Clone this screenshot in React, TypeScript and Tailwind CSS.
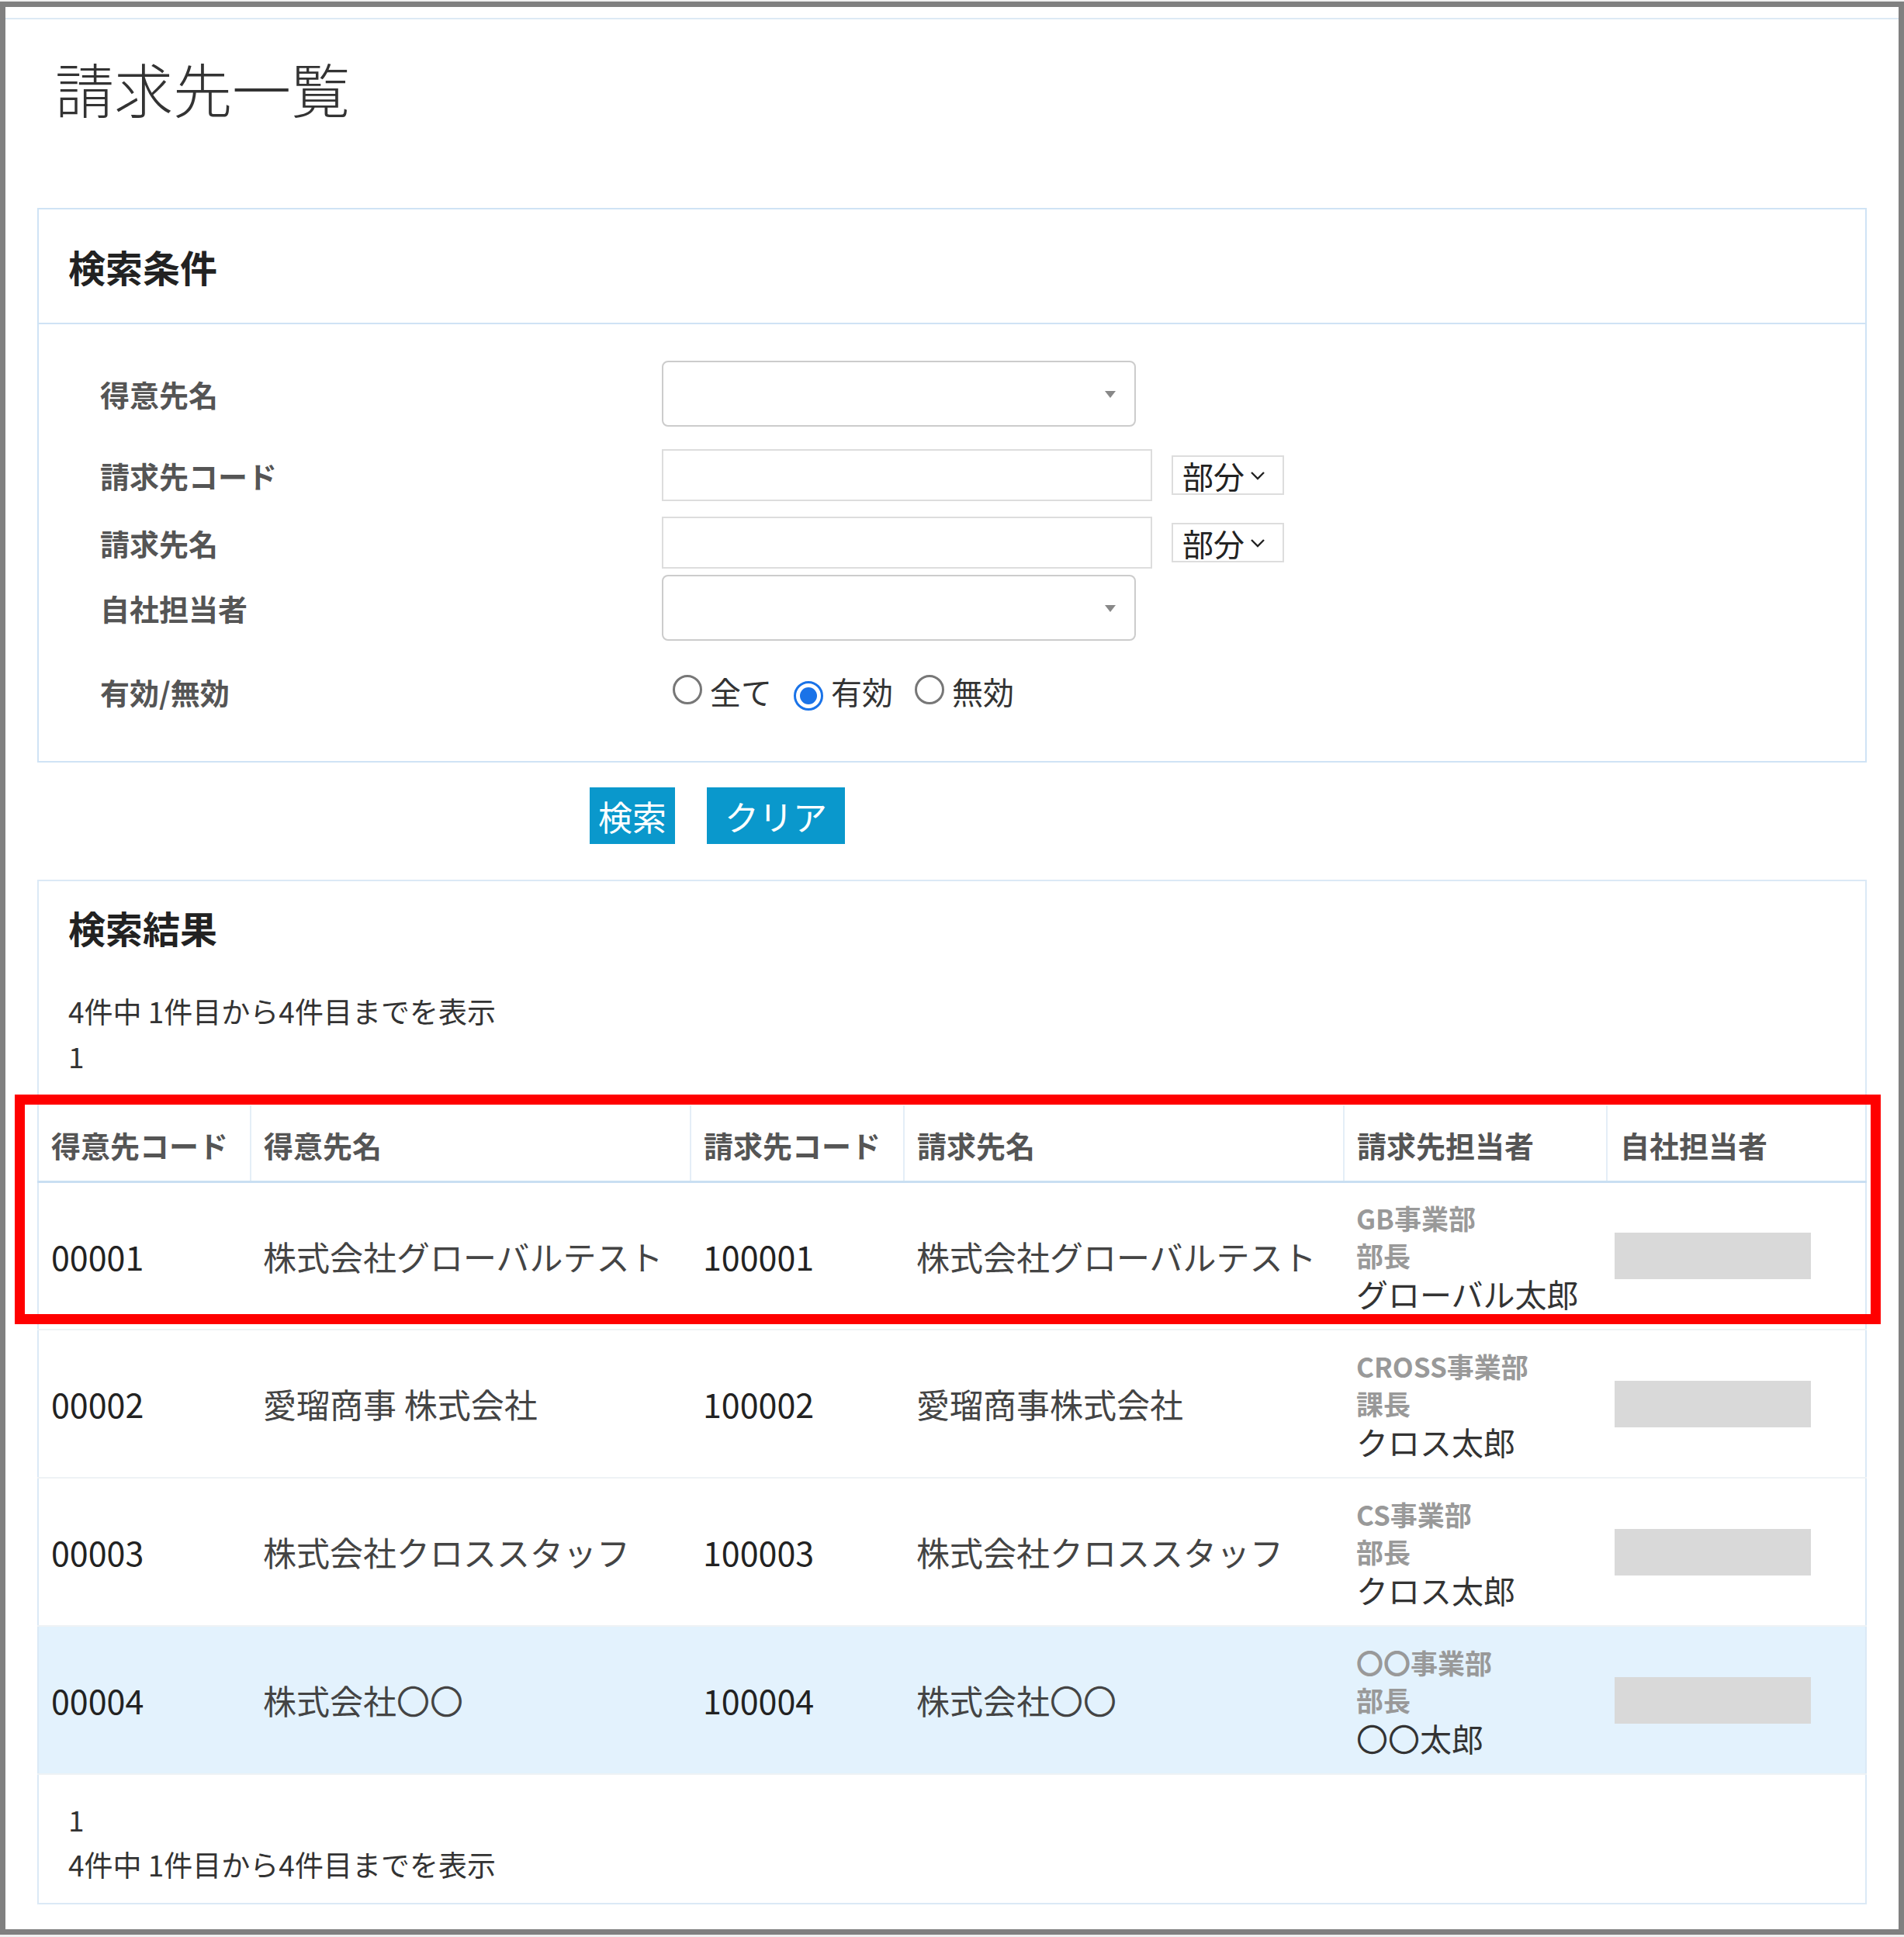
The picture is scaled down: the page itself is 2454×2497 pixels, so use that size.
import React from 'react'

const rows = [
	{ code: '00001', name: '株式会社グローバルテスト', bcode: '100001', bname: '株式会社グローバルテスト', dept: 'GB事業部', pos: '部長', person: 'グローバル太郎' },
	{ code: '00002', name: '愛瑠商事 株式会社', bcode: '100002', bname: '愛瑠商事株式会社', dept: 'CROSS事業部', pos: '課長', person: 'クロス太郎' },
	{ code: '00003', name: '株式会社クロススタッフ', bcode: '100003', bname: '株式会社クロススタッフ', dept: 'CS事業部', pos: '部長', person: 'クロス太郎' },
	{ code: '00004', name: '株式会社〇〇', bcode: '100004', bname: '株式会社〇〇', dept: '〇〇事業部', pos: '部長', person: '〇〇太郎' },
]

const Caret = () => (
	<svg width="18" height="12" viewBox="0 0 18 12" className="absolute right-[22px] top-1/2 -translate-y-1/2">
		<path d="M2 2 L16 2 L9 11 Z" fill="#888" />
	</svg>
)

const Chevron = () => (
	<svg width="22" height="14" viewBox="0 0 22 14" className="ml-[6px]">
		<path d="M3 3 L11 11 L19 3" fill="none" stroke="#222" strokeWidth="2.4" />
	</svg>
)

const Radio = ({ checked }: { checked?: boolean }) => (
	<span className={`inline-flex h-[38px] w-[38px] items-center justify-center rounded-full border-[3px] ${checked ? 'border-[#1a73e8]' : 'border-[#777]'}`}>
		{checked && <span className="h-[22px] w-[22px] rounded-full bg-[#1a73e8]" />}
	</span>
)

const Label = ({ children }: { children: React.ReactNode }) => (
	<div className="w-[803px] shrink-0 pl-[79px] text-[38px] font-bold text-[#555]">{children}</div>
)

const Count = () => <div className="text-[37px] text-[#333]">4件中 1件目から4件目までを表示</div>

export default function App() {
	return (
		<div className="h-[2497px] w-[2454px] bg-[#f0f0f0] pt-[2px]" style={{ fontFamily: '"Noto Sans CJK JP", "Noto Sans", sans-serif' }}>
			<div className="h-[2492px] w-[2454px] border-[7px] border-[#808080] bg-white">
				<div className="mt-[14px] border-t-2 border-[#ddeaf5] px-[41px]">
					<h1 className="pb-[117px] pl-[23px] pt-[50px] text-[76px] font-light leading-none text-[#333]">請求先一覧</h1>

					<section className="border-2 border-[#cfe3f5]">
						<div className="flex h-[148px] items-center border-b-2 border-[#cfe3f5] pl-[38px] text-[48px] font-bold text-[#222]">検索条件</div>
						<div className="flex flex-col pb-[60px] pt-[44px]">
							<div className="flex h-[91px] items-center">
								<Label>得意先名</Label>
								<div className="relative h-[85px] w-[611px] rounded-[8px] border-2 border-[#ccc] bg-white"><Caret /></div>
							</div>
							<div className="mt-[26px] flex h-[67px] items-center">
								<Label>請求先コード</Label>
								<div className="h-[67px] w-[632px] border-2 border-[#ddd]" />
								<div className="ml-[25px] flex h-[51px] w-[145px] items-center border-2 border-[#ddd] pl-[12px] text-[40px] text-[#222]">部分<Chevron /></div>
							</div>
							<div className="mt-[20px] flex h-[67px] items-center">
								<Label>請求先名</Label>
								<div className="h-[67px] w-[632px] border-2 border-[#ddd]" />
								<div className="ml-[25px] flex h-[51px] w-[145px] items-center border-2 border-[#ddd] pl-[12px] text-[40px] text-[#222]">部分<Chevron /></div>
							</div>
							<div className="mt-[8px] flex h-[85px] items-center">
								<Label>自社担当者</Label>
								<div className="relative h-[85px] w-[611px] rounded-[8px] border-2 border-[#ccc] bg-white"><Caret /></div>
							</div>
							<div className="mt-[35px] flex h-[60px] items-center">
								<Label>有効/無効</Label>
								<div className="flex items-center text-[40px] text-[#333]">
									<span className="ml-[14px]"><Radio /></span>
									<span className="ml-[10px]">全て</span>
									<span className="ml-[28px]"><Radio checked /></span>
									<span className="ml-[10px]">有効</span>
									<span className="ml-[28px]"><Radio /></span>
									<span className="ml-[10px]">無効</span>
								</div>
							</div>
						</div>
					</section>

					<div className="flex gap-[41px] pb-[46px] pl-[712px] pt-[32px]">
						<button className="h-[73px] w-[110px] bg-[#0a98cc] text-[44px] text-white">検索</button>
						<button className="h-[73px] w-[178px] bg-[#0a98cc] text-[44px] text-white">クリア</button>
					</div>

					<section className="border-2 border-b-0 border-[#dbe9f6] pb-[36px]">
						<div className="flex h-[118px] items-center pl-[38px] text-[48px] font-bold text-[#222]">検索結果</div>
						<div className="pl-[38px] pt-[22px]">
							<Count />
							<div className="mt-[2px] text-[37px] text-[#333]">1</div>
						</div>
					</section>

					<div className="relative">
						<div className="pointer-events-none absolute -left-[29px] -right-[18px] -top-[14px] z-10 h-[296px] border-[13px] border-[#ff0000]" />
						<table className="w-full table-fixed border-collapse border-x-2 border-[#dbe9f6] text-[43px] text-[#222]">
							<colgroup>
								<col className="w-[274px]" />
								<col className="w-[567px]" />
								<col className="w-[275px]" />
								<col className="w-[567px]" />
								<col className="w-[339px]" />
								<col />
							</colgroup>
							<thead>
								<tr className="h-[98px] border-b-[3px] border-[#c9dff2] text-left text-[38px] font-bold text-[#555]">
									{['得意先コード', '得意先名', '請求先コード', '請求先名', '請求先担当者', '自社担当者'].map((h, i) => (
										<th key={h} className={`px-[16px] pt-[4px] ${i < 5 ? 'border-r-2 border-[#e4eef7]' : ''}`}>{h}</th>
									))}
								</tr>
							</thead>
							<tbody>
								{rows.map((r, i) => (
									<tr key={r.code} className={`h-[191px] border-b-2 border-[#eef2f5] ${i === 3 ? 'bg-[#e3f2fd]' : ''}`}>
										<td className="whitespace-nowrap px-[16px]">{r.code}</td>
										<td className="whitespace-nowrap px-[16px] text-[#444]">{r.name}</td>
										<td className="whitespace-nowrap px-[16px]">{r.bcode}</td>
										<td className="whitespace-nowrap px-[16px] text-[#444]">{r.bname}</td>
										<td className="whitespace-nowrap px-[16px]">
											<div className="text-[35px] font-bold leading-[48px] text-[#999]">{r.dept}</div>
											<div className="text-[35px] font-bold leading-[48px] text-[#999]">{r.pos}</div>
											<div className="text-[41px] leading-[50px] text-[#333]">{r.person}</div>
										</td>
										<td className="px-[10px]">
											<div className="h-[60px] w-[253px] bg-[#d9d9d9]" />
										</td>
									</tr>
								))}
							</tbody>
						</table>
						<div className="border-x-2 border-b-2 border-[#dbe9f6] pb-[22px] pl-[38px] pt-[30px]">
							<div className="text-[37px] text-[#333]">1</div>
							<div className="mt-[2px]"><Count /></div>
						</div>
					</div>
				</div>
			</div>
		</div>
	)
}
